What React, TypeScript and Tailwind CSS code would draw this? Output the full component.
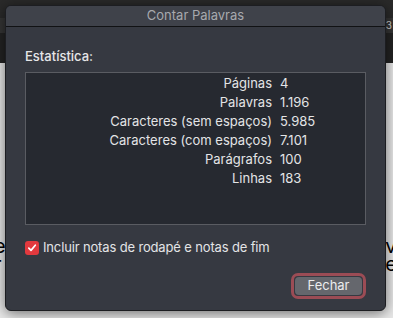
import React from "react";

const stats: [string, string][] = [
	["Páginas", "4"],
	["Palavras", "1.196"],
	["Caracteres (sem espaços)", "5.985"],
	["Caracteres (com espaços)", "7.101"],
	["Parágrafos", "100"],
	["Linhas", "183"],
];

function CheckIcon() {
	return (
		<svg width="10" height="10" viewBox="0 0 10 10" fill="none">
			<path d="M1.8 5.2 L4 7.4 L8.3 2.2" stroke="white" strokeWidth="1.7" strokeLinecap="round" strokeLinejoin="round" />
		</svg>
	);
}

export default function App() {
	return (
		<div
			className="relative w-[393px] h-[318px] overflow-hidden bg-[#e9e9e9] text-[13px]"
			style={{ fontFamily: "Inter, 'Liberation Sans', sans-serif" }}
		>
			{/* document window behind the dialog */}
			<div className="flex flex-col h-full">
				<div className="h-[18px] bg-[#2a2a2a]" />
				<div className="h-[15px] bg-[#353535] flex justify-end pr-[1px] text-[10px] text-[#d0d0d0] leading-[15px]">3</div>
				<div className="h-[30px] bg-[#232323]" />
				<div className="flex-1 flex justify-between text-[20px] text-black leading-[18px] pt-[174px]">
					<div className="flex flex-col -ml-[6px]">
						<span>e</span>
						<span>r</span>
					</div>
					<div className="flex flex-col -mr-[4px]">
						<span>v</span>
						<span>e</span>
					</div>
				</div>
			</div>

			{/* dialog */}
			<div className="absolute left-[5px] top-[5px] w-[381px] h-[306px] rounded-[6px] bg-[#363941] border border-[#1c1d21] shadow-[0_2px_14px_rgba(0,0,0,0.55)] flex flex-col overflow-hidden">
				<div className="h-[21px] shrink-0 bg-[#3f424a] border-b border-[#111214] flex items-center justify-center text-[#a7a9ae]">
					Contar Palavras
				</div>
				<div className="flex flex-col px-[19px] pt-[19px]">
					<div className="text-[#e6e6e8] leading-[20px] font-medium">Estatística:</div>
					<div className="mt-[6px] h-[153px] border border-[#5a5c62] bg-[#262930] pt-[1px]">
						{stats.map(([label, value]) => (
							<div key={label} className="flex h-[19px] items-center text-[#e3e4e6]">
								<span className="w-[246px] text-right">{label}</span>
								<span className="ml-[8px]">{value}</span>
							</div>
						))}
					</div>
					<div className="flex items-center mt-[13px]">
						<div className="w-[14px] h-[14px] rounded-[3px] bg-[#e2393e] flex items-center justify-center">
							<CheckIcon />
						</div>
						<span className="ml-[4px] text-[#e3e4e6] tracking-[-0.15px]">Incluir notas de rodapé e notas de fim</span>
					</div>
					<div className="flex justify-end mt-[15px]">
						<div className="rounded-[7px] border-[3px] border-[#9b4c55] p-[1px]">
							<button className="w-[67px] h-[18px] rounded-[4px] bg-[#65676d] text-[#ececee] flex items-center justify-center">
								Fechar
							</button>
						</div>
					</div>
				</div>
			</div>
		</div>
	);
}
